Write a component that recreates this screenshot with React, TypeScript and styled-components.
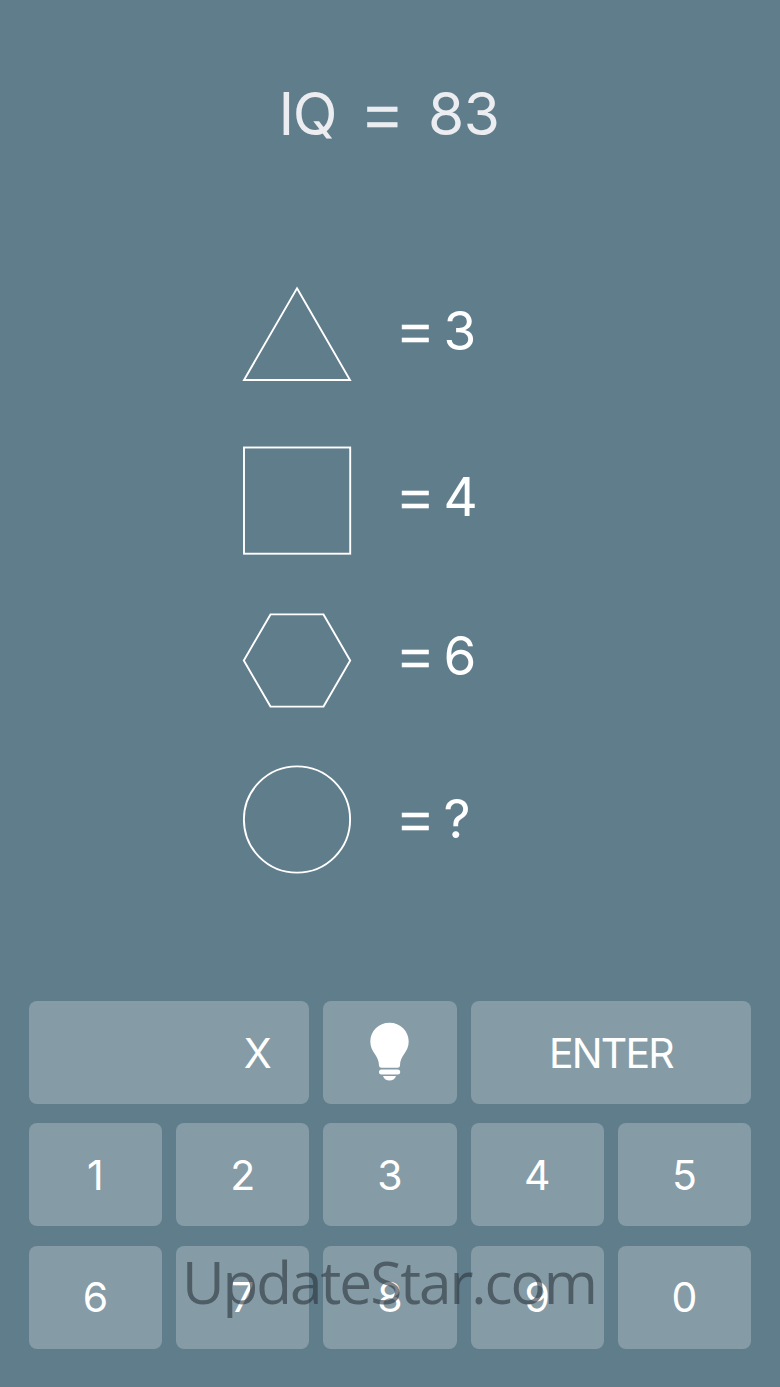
import React from "react";
import styled, { createGlobalStyle } from "styled-components";

const GlobalStyle = createGlobalStyle`
  * { box-sizing: border-box; }
  body { margin: 0; background: #607d8b; }
`;

const Screen = styled.main`
  position: relative;
  width: 780px;
  height: 1387px;
  overflow: hidden;
  display: flex;
  flex-direction: column;
  background: #607d8b;
  color: #fff;
  font-family: Inter, "Liberation Sans", sans-serif;
`;

const Title = styled.h1`
  display: flex;
  align-items: baseline;
  margin: 78px 0 0 278.5px;
  height: 72px;
  line-height: 72px;
  font-size: 58.5px;
  font-weight: 400;
  color: #ebedf0;
`;

const TitlePart = styled.span<{ $width: number; $tracking?: number }>`
  width: ${(p) => p.$width}px;
  letter-spacing: ${(p) => p.$tracking ?? 0}px;
  white-space: nowrap;
`;

const TitleEquals = styled(TitlePart)`
  transform: translateY(2px);
  font-family: "Liberation Sans", sans-serif;
  font-size: 61px;
  -webkit-text-stroke: 0.5px currentColor;
`;

const Puzzle = styled.section`
  display: flex;
  flex-direction: column;
  margin: 136px 0 0 242px;
  height: 588px;
`;

const Clue = styled.div<{ $height: number; $after: number }>`
  display: flex;
  align-items: center;
  height: ${(p) => p.$height}px;
  margin-bottom: ${(p) => p.$after}px;
`;

const Shape = styled.svg`
  flex: none;
  width: 110px;
  height: 100%;
  fill: none;
  stroke: #fff;
  stroke-width: 1.9;
`;

const Answer = styled.div<{ $lift: number }>`
  display: flex;
  align-items: baseline;
  margin-left: 47.5px;
  padding-bottom: ${(p) => p.$lift}px;
  font-size: 53px;
  line-height: 64px;
`;

const Equals = styled.span`
  width: 44px;
  transform: translateY(1px);
  font-family: "Liberation Sans", sans-serif;
  font-size: 54px;
  -webkit-text-stroke: 0.6px currentColor;
`;

const Keypad = styled.section`
  display: grid;
  grid-template-columns: repeat(5, 133.2px);
  grid-auto-rows: 103px;
  gap: 19.4px 14.1px;
  margin: 127px 0 0 28.8px;
`;

const Key = styled.button<{ $span?: number; $tracking?: number }>`
  grid-column: span ${(p) => p.$span ?? 1};
  display: flex;
  align-items: center;
  justify-content: center;
  padding: 0;
  border: 0;
  border-radius: 8px;
  background: #859ba5;
  color: #fff;
  font: 400 41px/50px Inter, "Liberation Sans", sans-serif;
  letter-spacing: ${(p) => p.$tracking ?? 0}px;
`;

const EntryKey = styled(Key)`
  justify-content: flex-end;
  padding-right: 37.5px;
`;

const Bulb = styled.svg`
  width: 40px;
  height: 60px;
  margin: 0 0 1px 0;
  fill: #fff;
`;

const Watermark = styled.div`
  position: absolute;
  left: 182px;
  top: 1241px;
  font: 400 58.5px/80px "Open Sans", "Noto Sans", sans-serif;
  letter-spacing: -2.05px;
  white-space: nowrap;
  color: rgba(45, 55, 63, 0.62);
  pointer-events: none;
`;

const clues = [
  { value: "3", height: 96, after: 64, lift: 6, shape: <path d="M55 2.3 L108 94 H2 Z" /> },
  { value: "4", height: 109, after: 58, lift: 8, shape: <rect x="2" y="1.5" width="106.2" height="106.2" /> },
  { value: "6", height: 96, after: 56, lift: 10, shape: <path d="M28.5 1.4 H81.5 L108.2 47.5 L81.5 93.6 H28.5 L1.8 47.5 Z" /> },
  { value: "?", height: 109, after: 0, lift: 2, shape: <circle cx="55" cy="54.5" r="53.1" /> },
];

export default function App() {
  return (
    <Screen>
      <GlobalStyle />
      <Title>
        <TitlePart $width={86} $tracking={-1.5}>IQ</TitlePart>
        <TitleEquals $width={63.5}>=</TitleEquals>
        <TitlePart $width={76} $tracking={-0.5}>83</TitlePart>
      </Title>
      <Puzzle>
        {clues.map((c) => (
          <Clue key={c.value} $height={c.height} $after={c.after}>
            <Shape>{c.shape}</Shape>
            <Answer $lift={c.lift}>
              <Equals>=</Equals>
              <span>{c.value}</span>
            </Answer>
          </Clue>
        ))}
      </Puzzle>
      <Keypad>
        <EntryKey $span={2}>X</EntryKey>
        <Key aria-label="Hint">
          <Bulb viewBox="0 0 40 60">
            <path d="M19.5 .8 C8.6 .8 .3 9 .3 19.6 C.3 30.5 9 33.5 9 43.5 Q9 45.8 11.5 45.8 H27.6 Q30 45.8 30 43.5 C30 33.5 38.7 30.5 38.7 19.6 C38.7 9 30.4 .8 19.5 .8 Z" />
            <rect x="9" y="47.4" width="21.2" height="5" rx="2.5" />
            <path d="M13 54 H26 C25 57 22.5 58.6 19.5 58.6 C16.5 58.6 14 57 13 54 Z" />
          </Bulb>
        </Key>
        <Key $span={2} $tracking={-1.9}>ENTER</Key>
        {["1", "2", "3", "4", "5", "6", "7", "8", "9", "0"].map((n) => (
          <Key key={n}>{n}</Key>
        ))}
      </Keypad>
      <Watermark>UpdateStar.com</Watermark>
    </Screen>
  );
}
